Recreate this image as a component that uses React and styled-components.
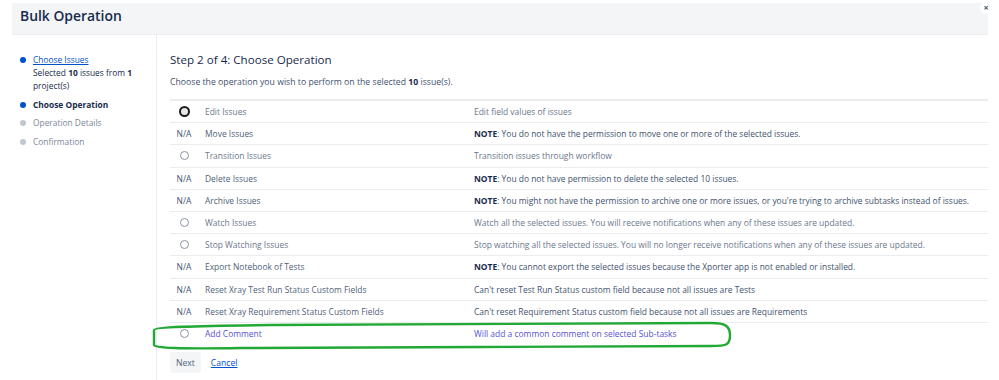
import React from "react";
import styled, { createGlobalStyle } from "styled-components";

const GlobalStyle = createGlobalStyle`
    html, body {
        margin: 0;
        padding: 0;
        background: #ffffff;
        font-family: "Open Sans", "Noto Sans", sans-serif;
        color: #172b4d;
    }
`

const steps = [
    { title: 'Choose Issues', state: 'done' },
    { title: 'Choose Operation', state: 'current' },
    { title: 'Operation Details', state: 'todo' },
    { title: 'Confirmation', state: 'todo' },
]

const operations = [
    { na: false, focus: true, name: 'Edit Issues', desc: 'Edit field values of issues' },
    { na: true, name: 'Move Issues', note: 'You do not have the permission to move one or more of the selected issues.' },
    { na: false, name: 'Transition Issues', desc: 'Transition issues through workflow' },
    { na: true, name: 'Delete Issues', note: 'You do not have permission to delete the selected 10 issues.' },
    { na: true, name: 'Archive Issues', note: "You might not have the permission to archive one or more issues, or you're trying to archive subtasks instead of issues." },
    { na: false, name: 'Watch Issues', desc: 'Watch all the selected issues. You will receive notifications when any of these issues are updated.' },
    { na: false, name: 'Stop Watching Issues', desc: 'Stop watching all the selected issues. You will no longer receive notifications when any of these issues are updated.' },
    { na: true, name: 'Export Notebook of Tests', note: 'You cannot export the selected issues because the Xporter app is not enabled or installed.' },
    { na: true, name: 'Reset Xray Test Run Status Custom Fields', desc: "Can't reset Test Run Status custom field because not all issues are Tests" },
    { na: true, name: 'Reset Xray Requirement Status Custom Fields', desc: "Can't reset Requirement Status custom field because not all issues are Requirements" },
    { na: false, highlight: true, name: 'Add Comment', desc: 'Will add a common comment on selected Sub-tasks' },
]

const App = () => {
    return (
        <>
            <GlobalStyle />
            <Dialog>
                <Header>
                    <Title>Bulk Operation</Title>
                    <Close>×</Close>
                </Header>
                <Body>
                    <Sidebar />
                    <Main />
                </Body>
            </Dialog>
        </>
    )
}

const Sidebar = () => {
    return (
        <SidebarWrapper>
            {steps.map((step) => (
                <Step key={step.title}>
                    <Bullet state={step.state} />
                    <StepText state={step.state}>
                        {step.state === 'done'
                            ? <>
                                <StepLink href="#">{step.title}</StepLink>
                                <div>Selected <b>10</b> issues from <b>1</b> project(s)</div>
                            </>
                            : step.title}
                    </StepText>
                </Step>
            ))}
        </SidebarWrapper>
    )
}

const Main = () => {
    return (
        <MainWrapper>
            <StepTitle>Step 2 of 4: Choose Operation</StepTitle>
            <Intro>Choose the operation you wish to perform on the selected <b>10</b> issue(s).</Intro>
            <Table>
                {operations.map((op) => (
                    <Row key={op.name} highlight={op.highlight}>
                        <Cell>
                            {op.na ? <NA>N/A</NA> : <Radio focus={op.focus} />}
                        </Cell>
                        <Name highlight={op.highlight} na={op.na}>{op.name}</Name>
                        <Desc highlight={op.highlight} na={op.na}>
                            {op.note ? <><b>NOTE</b>: {op.note}</> : op.desc}
                        </Desc>
                        {op.highlight && <Marker />}
                    </Row>
                ))}
            </Table>
            <Actions>
                <Button>Next</Button>
                <CancelLink href="#">Cancel</CancelLink>
            </Actions>
        </MainWrapper>
    )
}

const Marker = () => {
    return (
        <MarkerSvg viewBox="0 0 584 32" width="584" height="32">
            <path
                d="M3 9 C3 6 40 5 120 4 L560 2 C574 2 579 5 579 14 C579 24 576 25 560 25 L330 26 L90 27 C30 28 3 27 3 24 Z"
                fill="none"
                stroke="#22a834"
                strokeWidth="2.4"
                strokeLinejoin="round"
            />
        </MarkerSvg>
    )
}

const Dialog = styled.div`
    margin-left: 12px;
    width: 976px;
    height: 380px;
    display: flex;
    flex-direction: column;
    padding-top: 3px;
    box-sizing: border-box;
`

const Header = styled.div`
    position: relative;
    height: 28px;
    background: #f4f5f7;
    border-bottom: 1px solid #ebecf0;
    display: flex;
    align-items: flex-start;
    padding: 3px 0 0 8px;
    box-sizing: content-box;
`

const Title = styled.h1`
    margin: 0;
    font-size: 13.9px;
    font-weight: 600;
    color: #172b4d;
    line-height: 20px;
`

const Close = styled.span`
    position: absolute;
    top: -1px;
    right: -4px;
    width: 12px;
    height: 12px;
    border-radius: 50%;
    background: #ffffff;
    font-size: 9px;
    line-height: 12px;
    text-align: center;
    font-weight: 700;
    color: #42526e;
`

const Body = styled.div`
    flex: 1;
    display: flex;
`

const SidebarWrapper = styled.div`
    width: 145px;
    border-right: 1px solid #ebecf0;
    padding: 18px 8px 0 6px;
    box-sizing: border-box;
    display: flex;
    flex-direction: column;
    gap: 5.5px;
`

const Step = styled.div`
    display: flex;
    align-items: flex-start;
    gap: 7px;
`

const Bullet = styled.span`
    flex: none;
    width: 6px;
    height: 6px;
    margin-top: 4px;
    margin-left: 2px;
    border-radius: 50%;
    background: ${({ state }) => state === 'todo' ? '#c1c7d0' : '#0052cc'};
`

const StepText = styled.div`
    font-size: 8.4px;
    line-height: 13px;
    color: ${({ state }) => state === 'todo' ? '#7a869a' : '#172b4d'};
    font-weight: ${({ state }) => state === 'current' ? 700 : 400};
`

const StepLink = styled.a`
    color: #0052cc;
    text-decoration: underline;
`

const MainWrapper = styled.div`
    flex: 1;
    position: relative;
    padding: 17px 0 0 13px;
`

const StepTitle = styled.h2`
    margin: 0;
    font-size: 11.6px;
    font-weight: 500;
    line-height: 16px;
    color: #172b4d;
`

const Intro = styled.p`
    margin: 8px 0 0;
    font-size: 8.7px;
    line-height: 12px;
    color: #42526e;

    b {
        color: #172b4d;
    }
`

const Table = styled.div`
    margin-top: 11px;
    border-top: 2px solid #ebecf0;
`

const Row = styled.div`
    position: relative;
    display: grid;
    grid-template-columns: 28px 276px 1fr;
    align-items: center;
    height: 21.2px;
    border-bottom: ${({ highlight }) => highlight ? '1px solid transparent' : '1px solid #ebecf0'};
    font-size: 8.45px;
`

const Cell = styled.div`
    display: flex;
    justify-content: center;
    align-items: center;
`

const NA = styled.span`
    color: #42526e;
`

const Radio = styled.span`
    box-sizing: border-box;
    width: ${({ focus }) => focus ? '11px' : '9px'};
    height: ${({ focus }) => focus ? '11px' : '9px'};
    border-radius: 50%;
    border: ${({ focus }) => focus ? '2px solid #1b1b1b' : '1px solid #8993a4'};
    background: ${({ focus }) => focus ? '#e6e8ec' : '#ffffff'};
`

const Name = styled.div`
    padding-left: 7px;
    color: ${({ highlight, na }) => highlight ? '#5552d6' : na ? '#505f79' : '#6b778c'};
`

const Desc = styled.div`
    white-space: nowrap;
    color: ${({ highlight, na }) => highlight ? '#5552d6' : na ? '#42526e' : '#6b778c'};

    b {
        color: #172b4d;
    }
`

const MarkerSvg = styled.svg`
    position: absolute;
    left: -19px;
    top: -2px;
    pointer-events: none;
    overflow: visible;
`

const Actions = styled.div`
    margin-top: 7px;
    display: flex;
    align-items: center;
    gap: 10px;
`

const Button = styled.button`
    border: none;
    border-radius: 3px;
    background: #f4f5f7;
    color: #505f79;
    font-family: inherit;
    font-size: 8.6px;
    height: 21px;
    padding: 0 6px;
`

const CancelLink = styled.a`
    font-size: 8.6px;
    color: #0052cc;
    text-decoration: underline;
`

export default App;
